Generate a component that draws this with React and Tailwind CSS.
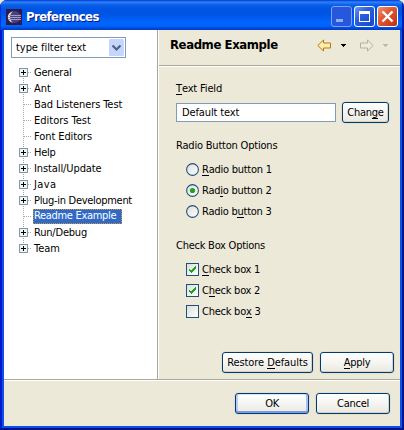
import React from 'react';

const TREE = [
  { label: 'General', branch: true, tracking: 'tracking-[-0.2px]' },
  { label: 'Ant', branch: true, tracking: 'tracking-[0px]' },
  { label: 'Bad Listeners Test', tracking: 'tracking-[-0.08px]' },
  { label: 'Editors Test', tracking: 'tracking-[0px]' },
  { label: 'Font Editors', tracking: 'tracking-[-0.08px]' },
  { label: 'Help', branch: true, tracking: 'tracking-[-0.25px]' },
  { label: 'Install/Update', branch: true, tracking: 'tracking-[-0.1px]' },
  { label: 'Java', branch: true, tracking: 'tracking-[0.4px]' },
  { label: 'Plug-in Development', branch: true, tracking: 'tracking-[-0.3px]' },
  { label: 'Readme Example', selected: true, tracking: 'tracking-[-0.32px]' },
  { label: 'Run/Debug', branch: true, tracking: 'tracking-[-0.2px]' },
  { label: 'Team', branch: true, tracking: 'tracking-[0px]' },
];

function Mnemonic({ text, at }) {
  if (at === undefined) return text;
  return <>{text.slice(0, at)}<span className="inline-block h-[12px] border-b border-black leading-[12px]">{text[at]}</span>{text.slice(at + 1)}</>;
}

function Button({ text, at, className, primary }) {
  return (
    <button className={`h-[21px] shrink-0 rounded-[3px] border border-[#003c74] bg-linear-to-b from-white via-[#f5f5f1] to-[#ebe8e0] text-center leading-[18px] whitespace-nowrap ${primary ? 'shadow-[inset_0_-2px_0_#7a9bea,inset_2px_0_0_#b5cdf8,inset_-2px_0_0_#a5c0f5,inset_0_1px_0_#cee7ff,0_0_0_1px_#e3dfcd]' : 'shadow-[inset_-1px_-1px_0_#d6d0c5,0_0_0_1px_#e3dfcd]'} ${className}`}>
      <Mnemonic text={text} at={at} />
    </button>
  );
}

function TreeRow({ label, branch, selected, tracking, first, last }) {
  return (
    <li className="flex h-4 items-center">
      <svg width="15" height="16" shapeRendering="crispEdges" className="shrink-0">
        <path d={`M4.5 ${first ? 8 : 0}V${last ? 9 : 16}`} stroke="#aca899" strokeDasharray="1 1" />
        <path d="M5 8.5H13" stroke="#aca899" strokeDasharray="1 1" />
        {branch && (
          <>
            <rect x=".5" y="4.5" width="8" height="8" fill="#f5f3ee" stroke="#7898b5" />
            <path d="M2 8.5h5M4.5 6v5" stroke="#000" />
          </>
        )}
      </svg>
      <span className={`${tracking} ${selected ? '-ml-px h-[15px] w-[89px] self-end bg-[#316ac5] pl-px leading-[13px] text-white outline-1 -outline-offset-1 outline-dotted outline-[#ce953a]' : 'leading-[15px]'}`}>{label}</span>
    </li>
  );
}

function Radio({ text, at, checked }) {
  return (
    <label className="flex h-[21px] items-center gap-[3px]">
      <svg width="13" height="13">
        <circle cx="6.5" cy="6.5" r="5.9" fill="url(#wellFill)" stroke="#21517f" strokeWidth="1.1" />
        {checked && <circle cx="6.5" cy="6.5" r="2.6" fill="#21a121" />}
      </svg>
      <span className="leading-[14px]"><Mnemonic text={text} at={at} /></span>
    </label>
  );
}

function Check({ text, at, checked }) {
  return (
    <label className="flex h-[21px] items-center gap-[3px]">
      <svg width="13" height="13">
        <rect x=".5" y=".5" width="12" height="12" fill="url(#wellFill)" stroke="#1c5180" />
        {checked && <path d="M3 5v3l2 2 5-5V3L5 7.5z" fill="#21a121" shapeRendering="crispEdges" />}
      </svg>
      <span className="leading-[14px]"><Mnemonic text={text} at={at} /></span>
    </label>
  );
}

function Caption({ kind }) {
  return (
    <svg width="21" height="21">
      <rect x=".5" y=".5" width="20" height="20" rx="2.5" fill={kind === 'close' ? 'url(#red)' : kind === 'min' ? '#2558dc' : 'url(#blue)'} stroke={kind === 'min' ? '#7f9ff0' : '#fff'} />
      {kind === 'min' && <path d="M5 13h7v3H5z" fill="#8eacf4" />}
      {kind === 'max' && <path d="M5 5h11v11H5zM6 8v7h9V8z" fill="#fff" fillRule="evenodd" />}
      {kind === 'close' && <path d="M5.5 5.5l10 10M15.5 5.5l-10 10" stroke="#fff" strokeWidth="2.4" />}
    </svg>
  );
}

export default function App() {
  return (
    <div className="h-[430px] w-[404px] overflow-hidden bg-[#ece9d8] [font-family:'DejaVu_Sans_Condensed','DejaVu_Sans',sans-serif] text-[11px] tracking-[-0.25px] text-black">
      <div className="flex h-full flex-col overflow-hidden rounded-t-[7px] bg-[#0831d9]">
        <header className="flex h-[30px] shrink-0 items-center bg-[linear-gradient(to_bottom,#0831d9_0px,#2b85f7_2px,#0a5ee8_5px,#0054e3_9px,#0055e5_15px,#0066ff_22px,#0064fb_26px,#0040cd_29px)] pt-[3px] pr-[6px] pl-[6px] shadow-[inset_1px_0_0_#0831d9,inset_-2px_0_0_#0020a8]">
          <svg width="16" height="16" className="mr-[4px]">
            <defs>
              <linearGradient id="wellFill" x2="1" y2="1"><stop stopColor="#dcdcd7" /><stop offset="1" stopColor="#fff" /></linearGradient>
              <linearGradient id="blue" x2="1" y2="1"><stop stopColor="#6f9af5" /><stop offset=".4" stopColor="#2a5fe0" /><stop offset="1" stopColor="#1745c8" /></linearGradient>
              <linearGradient id="red" x2="1" y2="1"><stop stopColor="#f0957c" /><stop offset=".4" stopColor="#e15a36" /><stop offset="1" stopColor="#bd300c" /></linearGradient>
            </defs>
            <rect width="16" height="16" fill="#2c1c4c" />
            <circle cx="8.5" cy="8" r="6" fill="#4a4080" />
            <path d="M7 2.2C3.5 3 1.8 5.500 1.800 8S3.500 13 7 13.800C4.800 12 4 10 4 8s.8-4 3-5.800z" fill="#e8e4ee" />
            <path d="M3 6.500h12M2 8.500h13M3 10.500h12" stroke="#9d9bc8" />
          </svg>
          <h1 className="flex-1 text-[13px] leading-5 font-bold tracking-[-0.58px] text-white [text-shadow:1px_1px_0_#0a1883]">Preferences</h1>
          <div className="flex gap-[2px]"><Caption kind="min" /><Caption kind="max" /><Caption kind="close" /></div>
        </header>
        <div className="flex min-h-0 flex-1 flex-col border-x-2 border-b-2 border-t-0 border-l-[#0019cf] border-r-[#00138c] border-b-[#00138c]">
          <div className="flex min-h-0 flex-1 flex-col border-x-2 border-b-2 border-[#0c50e8] bg-[#ece9d8]">
            <div className="flex h-[350px] shrink-0 border-b border-[#aca899]">
              <aside className="w-[154px] shrink-0 border-r border-[#aca899] bg-white pt-[7px] pl-[7px]">
                <div className="flex h-[21px] w-[115px] items-center border border-[#7f9db9] pr-px pl-[4px]">
                  <span className="flex-1 leading-[17px] tracking-[-0.05px]">type filter text</span>
                  <svg width="15" height="17"><rect width="15" height="17" rx="1.5" fill="#c6d5fd" /><path d="M3.500 6.500l4 4 4-4" fill="none" stroke="#4d6185" strokeWidth="2.200" /></svg>
                </div>
                <ul className="mt-[6px] pl-[8px]">
                  {TREE.map((item, i) => <TreeRow key={item.label} {...item} first={i === 0} last={i === TREE.length - 1} />)}
                </ul>
              </aside>
              <main className="flex-1 border-l border-white">
                <div className="flex h-[36px] items-center border-b border-[#aca899] pr-[10px] pl-[11px] shadow-[0_1px_0_#fff]">
                  <h2 className="flex-1 pb-[5px] text-[13px] font-bold tracking-[-0.4px]">Readme Example</h2>
                  <svg width="73" height="13" className="mb-[5px]">
                    <path d="M.8 6.500L6.500 1v3h7v5h-7v3z" fill="#ffedae" stroke="#b8780e" />
                    <path d="M24 5h5v1h-1v1h-1v1h-1V7h-1V6h-1z" fill="#000" />
                    <path d="M56.200 6.500L50.500 1v3h-7v5h7v3z" fill="#eeebdc" stroke="#b5b1a2" />
                    <path d="M66 5h5v1h-1v1h-1v1h-1V7h-1V6h-1z" fill="#bcb8a9" />
                  </svg>
                </div>
                <section className="pt-[16px] pl-[17px]">
                  <div className="h-[20px] leading-[14px] tracking-[-0.15px]"><Mnemonic text="Text Field" at={0} /></div>
                  <div className="flex items-center gap-[6px]">
                    <div className="h-[19px] w-[160px] border border-[#7f9db9] bg-white pl-[5px] leading-[17px] tracking-[-0.13px]">Default text</div>
                    <Button text="Change" at={4} className="w-[47px]" />
                  </div>
                  <div className="mt-[16px] h-[20px] leading-[14px] tracking-[-0.2px]">Radio Button Options</div>
                  <div className="pl-[10px]"><Radio text="Radio button 1" at={0} /><Radio text="Radio button 2" at={3} checked /><Radio text="Radio button 3" at={7} /></div>
                  <div className="mt-[17px] h-[20px] leading-[14px]">Check Box Options</div>
                  <div className="pl-[10px]"><Check text="Check box 1" at={0} checked /><Check text="Check box 2" at={1} checked /><Check text="Check box 3" at={9 - 1} /></div>
                </section>
                <div className="mt-[30px] flex justify-end gap-[7px] pr-[6px]">
                  <Button text="Restore Defaults" at={8} className="w-[91px] tracking-[-0.08px]" />
                  <Button text="Apply" at={0} className="w-[74px]" />
                </div>
              </main>
            </div>
            <footer className="flex flex-1 justify-end gap-[7px] border-t border-white pt-[12px] pr-[10px]">
              <Button text="OK" className="w-[74px] tracking-[-0.4px]" primary />
              <Button text="Cancel" className="w-[74px]" />
            </footer>
          </div>
        </div>
      </div>
    </div>
  );
}
